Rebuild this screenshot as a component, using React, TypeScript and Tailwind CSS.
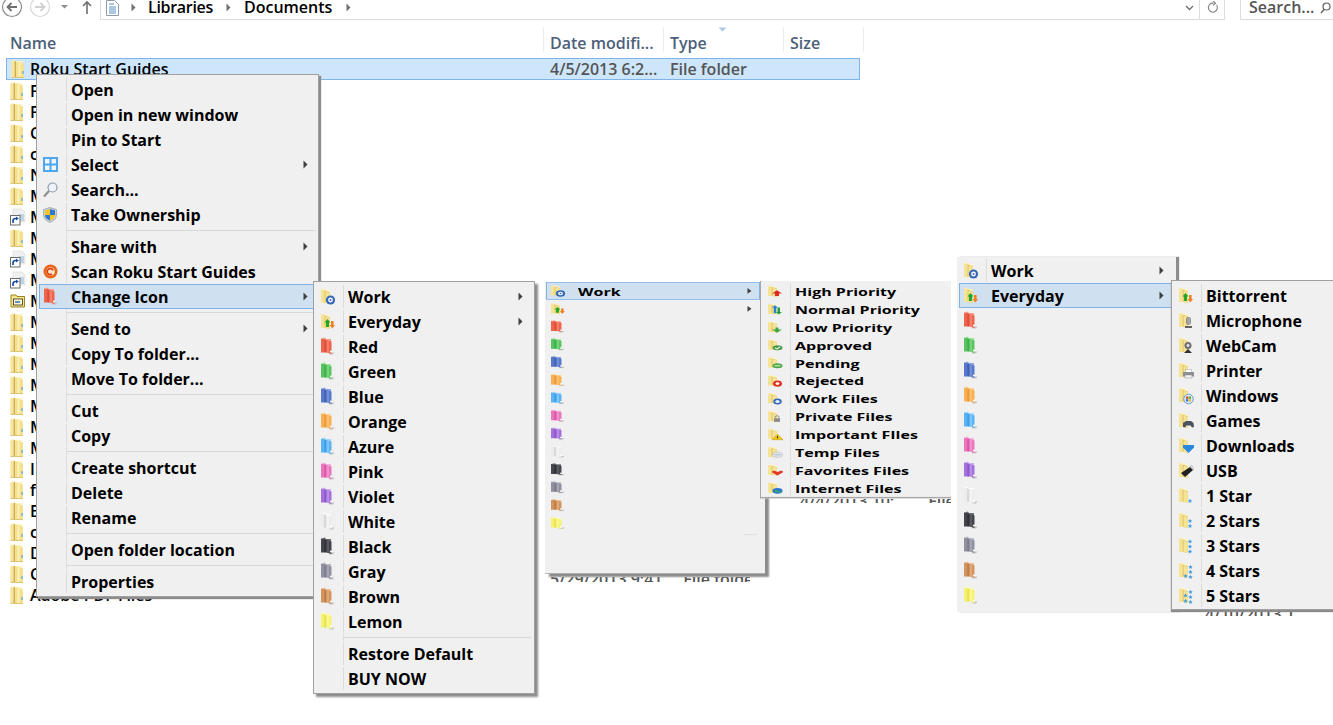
import React from "react";

type Pal = [string, string, string];
const PAL: Record<string, Pal> = {
  yellow: ["#f6e496", "#dcbc5c", "#fdf3c0"],
  red: ["#f0644c", "#c43c2c", "#f89c88"],
  green: ["#58c460", "#2c9a38", "#98e294"],
  blue: ["#5878cc", "#2f4c9c", "#8ca4e4"],
  orange: ["#f8b050", "#dc8828", "#fcd090"],
  azure: ["#58b4f4", "#2c88d8", "#a4d8fa"],
  pink: ["#ec74bc", "#c03c94", "#f6b0dc"],
  violet: ["#a470dc", "#7840b8", "#ccaaee"],
  white: ["#ececec", "#c4c4c4", "#fafafa"],
  black: ["#44444c", "#1c1c20", "#6c6c74"],
  gray: ["#9090a0", "#686878", "#b8b8c4"],
  brown: ["#d49460", "#a86834", "#ecbc94"],
  lemon: ["#f6f270", "#dcd438", "#fcfab4"],
};

function Star({ x, y }: { x: number; y: number }) {
  return (
    <polygon
      transform={`translate(${x} ${y}) scale(0.55)`}
      points="0,-4 1.2,-1.2 4,-1 1.8,0.8 2.6,3.6 0,2 -2.6,3.6 -1.8,0.8 -4,-1 -1.2,-1.2"
      fill="#3c9ce0"
    />
  );
}

function Badge({ b }: { b?: string }) {
  switch (b) {
    case "gear":
      return (
        <g>
          <circle cx="10.5" cy="12" r="4.6" fill="#3468b8" />
          <circle cx="10.5" cy="12" r="2.4" fill="#fff" />
          <circle cx="10.5" cy="12" r="1" fill="#3468b8" />
        </g>
      );
    case "torrent":
      return (
        <g>
          <path d="M7.5 6l3 3.5H9V14H6V9.5H4.5z" fill="#20a828" />
          <path d="M11 8h2.6v4H15l-2.7 3.5L9.6 12H11z" fill="#f08020" />
        </g>
      );
    case "high":
      return <path d="M10 7l5 4.5h-3V15H8v-3.500H5z" fill="#e02c20" />;
    case "normal":
      return (
        <g>
          <path d="M8 3l3 3.5H9.2V14H6.8V6.5H5z" fill="#2480d8" />
          <path d="M10.500 6h2.500v6.500H15L11.800 16 8.800 12.500h1.700z" fill="#20a040" />
        </g>
      );
    case "low":
      return <path d="M8.500 9h3v3H15l-5 4.500L5 12h3.500z" fill="#40a840" />;
    case "approved":
      return (
        <g>
          <ellipse cx="10.5" cy="12.5" rx="5" ry="3.5" fill="#4a9c48" />
          <path d="M8 12.500l2 1.600 3-3" stroke="#fff" strokeWidth="1.2" fill="none" />
        </g>
      );
    case "pending":
      return (
        <g>
          <ellipse cx="10.5" cy="12.5" rx="5" ry="3.5" fill="#48a848" />
          <rect x="7.5" y="11.5" width="6" height="2" fill="#b4e8a8" />
        </g>
      );
    case "rejected":
      return (
        <g>
          <circle cx="10.5" cy="12.5" r="4.5" fill="#e03020" />
          <circle cx="10.5" cy="12.5" r="2" fill="#fff" />
        </g>
      );
    case "workfile":
      return (
        <g>
          <circle cx="10.5" cy="12.5" r="4.2" fill="#2f68c0" />
          <circle cx="10.5" cy="12.5" r="2.2" fill="#e8f0ff" />
        </g>
      );
    case "private":
      return (
        <g>
          <rect x="7" y="11" width="6" height="5" fill="#8c8c8c" />
          <path d="M8 11V9.500a2 2 0 014 0V11" stroke="#808080" fill="none" />
        </g>
      );
    case "important":
      return (
        <g>
          <path d="M10.500 8L16 16H5z" fill="#f0c810" stroke="#b08810" strokeWidth="0.5" />
          <rect x="10" y="11" width="1" height="3" fill="#222" />
        </g>
      );
    case "temp":
      return (
        <g>
          <ellipse cx="10.5" cy="12" rx="5" ry="3.6" fill="#e4e8ec" stroke="#a8b0b8" strokeWidth="0.6" />
          <path d="M7 12h7" stroke="#9cb4cc" />
        </g>
      );
    case "favorites":
      return <path d="M10.500 16L5 11.500Q5 9 7.500 9.500L10.500 11 13.500 9.500Q16 9 16 11.500z" fill="#e03828" />;
    case "internet":
      return (
        <g>
          <ellipse cx="10.5" cy="12.5" rx="5" ry="4" fill="#2878d0" />
          <path d="M7.500 11.500h3v3h-2zM11.500 13h2.500l-1 2h-1.500z" fill="#40b048" />
        </g>
      );
    case "mic":
      return (
        <g>
          <rect x="8" y="5" width="5" height="8" rx="2.4" fill="#8c8c8c" />
          <path d="M7 14h7v2H7z" fill="#606060" />
          <path d="M10 6v6M11.500 6v6" stroke="#d8d8d8" strokeWidth="0.5" />
        </g>
      );
    case "webcam":
      return (
        <g>
          <circle cx="10" cy="8.5" r="3.5" fill="#707070" />
          <circle cx="10" cy="8.5" r="1.4" fill="#e8e8e8" />
          <path d="M6 16l4-4 4 4z" fill="#303030" />
        </g>
      );
    case "printer":
      return (
        <g>
          <rect x="7.5" y="7.5" width="6" height="3" fill="#fff" stroke="#909090" strokeWidth="0.4" />
          <rect x="5" y="10" width="11" height="4.5" fill="#8c9096" />
          <rect x="7" y="13" width="7" height="3" fill="#f0f0f0" stroke="#808080" strokeWidth="0.4" />
        </g>
      );
    case "windows":
      return (
        <g>
          <circle cx="10.5" cy="12" r="4.8" fill="#dce8f8" stroke="#5888c8" strokeWidth="0.8" />
          <rect x="8" y="9.5" width="2.3" height="2.3" fill="#e04828" />
          <rect x="10.7" y="9.5" width="2.3" height="2.3" fill="#50b030" />
          <rect x="8" y="12.2" width="2.3" height="2.3" fill="#2878d8" />
          <rect x="10.7" y="12.2" width="2.3" height="2.3" fill="#f0c020" />
        </g>
      );
    case "games":
      return <path d="M5 11l3-2h5l2.500 2 .5 4-2 .5-1.500-2h-4l-1.500 2-2-.5z" fill="#4c5460" />;
    case "downloads":
      return <path d="M5 8h11v2.500l-5.500 5.500L5 10.500z" fill="#2888e0" />;
    case "usb":
      return (
        <g>
          <path d="M3 11l9-6 3 3-8 7z" fill="#202020" />
          <path d="M12 4.500l2-1 2.500 2.500-1 2z" fill="#e0e0e0" stroke="#666" strokeWidth="0.3" />
        </g>
      );
    case "s1":
      return <Star x={12} y={14} />;
    case "s2":
      return (
        <g>
          <Star x={12} y={9} />
          <Star x={12} y={14} />
        </g>
      );
    case "s3":
      return (
        <g>
          <Star x={12} y={4.5} />
          <Star x={12} y={9.5} />
          <Star x={12} y={14.5} />
        </g>
      );
    case "s4":
      return (
        <g>
          <Star x={12.5} y={5} />
          <Star x={12.5} y={10} />
          <Star x={12.5} y={15} />
          <Star x={7.5} y={14} />
        </g>
      );
    case "s5":
      return (
        <g>
          <Star x={12.5} y={5} />
          <Star x={12.5} y={10} />
          <Star x={12.5} y={15} />
          <Star x={7.5} y={14} />
          <Star x={7.5} y={8.5} />
        </g>
      );
    default:
      return null;
  }
}

function Folder({ c = "yellow", b }: { c?: string; b?: string }) {
  const [base, dark, light] = PAL[c];
  if (!b)
    return (
      <svg width="16" height="18" viewBox="0 0 16 18" className="-mt-[2px] shrink-0">
        <path d="M10 15.500h4.500l-1.500 2H9z" fill="#c4c4c4" />
        <path d="M1 1.500L5 0.500 6 2h5v13H1z" fill={light} />
        <path d="M1 2H4.500V15.500H1z" fill={base} />
        <path d="M4.500 2.500L11.500 4.500V17L4.500 15z" fill={base} />
        <path d="M4.500 2.500V15.500l1 .3V3z" fill={dark} />
        <path d="M8 4v12" stroke={light} strokeWidth="1.5" opacity="0.7" />
        <circle cx="11" cy="14.5" r="1.1" fill="#fff" />
      </svg>
    );
  return (
    <svg width="16" height="18" viewBox="0 0 16 18" className="shrink-0">
      <path d="M1 1.500L4.500 0.500 5.500 2H9.500v12.500H1z" fill={light} />
      <path d="M1 1.500H4.500V15H1z" fill={base} />
      <path d="M4.500 2.500L9.800 4.500V16L4.500 14.500z" fill={dark} />
      <path d="M5.500 3.500L9.800 5V16L5.500 15z" fill={base} />
      <Badge b={b} />
    </svg>
  );
}

function ListFolder({ kind }: { kind: string }) {
  if (kind === "net")
    return (
      <svg width="16" height="18" viewBox="0 0 16 18" className="shrink-0">
        <path d="M1 3h5l1 1.500h7.500V15H1z" fill="#f6e48c" stroke="#9c8420" />
        <rect x="3.5" y="7" width="9" height="6" fill="#fff7c8" stroke="#303030" strokeWidth="0.8" />
        <path d="M5 10h5" stroke="#2060c0" strokeWidth="1.4" />
      </svg>
    );
  if (kind === "short")
    return (
      <svg width="16" height="18" viewBox="0 0 16 18" className="shrink-0">
        <path d="M3 1h9l3 3v10H3z" fill="#eef0f2" stroke="#dcd8c8" strokeWidth="0.6" />
        <rect x="9" y="6" width="5" height="7" fill="#c0d4e8" />
        <rect x="0.5" y="7.5" width="9.5" height="9.5" fill="#fff" stroke="#6c6c6c" />
        <path d="M3 15v-2q0-2.500 2.500-2.500H7" stroke="#1850a8" strokeWidth="1.7" fill="none" />
        <path d="M6 8.500l2.800 2-2.800 2z" fill="#1850a8" />
      </svg>
    );
  return (
    <svg width="14" height="20" viewBox="0 0 14 20" className="shrink-0">
      <path d="M0.500 2L4 1l1 1h7v16H0.500z" fill="#fdf2bc" />
      <path d="M0.500 2.500H4V18.500H0.500z" fill="#f6e49c" />
      <path d="M4.500 2.500L13 4.500V19.500L4.500 18z" fill="#f4e08e" />
      <path d="M4.300 2v16.500" stroke="#c8a850" strokeWidth="1.2" />
      <path d="M8.500 4v14" stroke="#fbf0b8" strokeWidth="2" />
      <path d="M0.500 18.500H12.500" stroke="#dcc476" />
      <rect x="11.5" y="12" width="1.2" height="3" fill="#58a8e8" />
    </svg>
  );
}

type Item = {
  label?: string;
  icon?: React.ReactNode;
  arrow?: boolean;
  active?: boolean;
  sep?: boolean;
  plainSep?: boolean;
  noGutter?: boolean;
};

function Arrow() {
  return (
    <svg width="5" height="9" viewBox="0 0 5 9" className="shrink-0">
      <path d="M0.500 0.500L4.500 4.500 0.500 8.500z" fill="#404040" />
    </svg>
  );
}

function Row({ it }: { it: Item }) {
  if (it.sep)
    return (
      <div className="flex h-[7px] items-center">
        <div className={`h-full w-[28px] shrink-0 border-r ${it.noGutter ? "border-transparent" : "border-[#dcdcdc]"}`} />
        <div className={`h-px flex-1 ${it.plainSep ? "ml-[170px] mr-[3px] bg-[#d8d8d8]" : "bg-[#d8d8d8]"}`} />
      </div>
    );
  return (
    <div
      className={`flex h-[25px] items-center border ${
        it.active ? "border-[#7eb3e8] bg-[#cfe0f1]" : "border-transparent"
      }`}
    >
      <div
        className={`flex h-full w-[27px] shrink-0 items-center border-r pl-[3px] ${
          it.noGutter ? "border-transparent" : "border-[#dcdcdc]"
        }`}
      >
        {it.icon}
      </div>
      <span className="ml-[4px] flex-1 truncate">{it.label}</span>
      {it.arrow && <Arrow />}
      {it.arrow && <span className="w-[7px]" />}
    </div>
  );
}

function MenuItems({ items }: { items: Item[] }) {
  return (
    <>
      {items.map((it, i) => (
        <Row key={i} it={it} />
      ))}
    </>
  );
}

const s = (): Item => ({ sep: true });

const colors: [string, string][] = [
  ["Red", "red"],
  ["Green", "green"],
  ["Blue", "blue"],
  ["Orange", "orange"],
  ["Azure", "azure"],
  ["Pink", "pink"],
  ["Violet", "violet"],
  ["White", "white"],
  ["Black", "black"],
  ["Gray", "gray"],
  ["Brown", "brown"],
  ["Lemon", "lemon"],
];

const menu1: Item[] = [
  { label: "Open" },
  { label: "Open in new window" },
  { label: "Pin to Start" },
  {
    label: "Select",
    arrow: true,
    icon: (
      <svg width="15" height="15" viewBox="0 0 15 15">
        <rect width="15" height="15" fill="#4ca6f0" />
        <rect x="2" y="2" width="4.5" height="4.5" fill="#f0f6fc" />
        <rect x="8.5" y="2" width="4.5" height="4.5" fill="#f0f6fc" />
        <rect x="2" y="8.5" width="4.5" height="4.5" fill="#f0f6fc" />
        <rect x="8.5" y="8.5" width="4.5" height="4.5" fill="#f0f6fc" />
      </svg>
    ),
  },
  {
    label: "Search...",
    icon: (
      <svg width="15" height="16" viewBox="0 0 15 16">
        <circle cx="9.5" cy="5.5" r="4.5" fill="#eef4fa" stroke="#8c9cac" strokeWidth="1.2" />
        <path d="M6 9L1 14.500" stroke="#8c8c8c" strokeWidth="2" />
      </svg>
    ),
  },
  {
    label: "Take Ownership",
    icon: (
      <svg width="14" height="16" viewBox="0 0 14 16">
        <path d="M7 0.500L13.500 2.500V8Q13.500 13 7 15.500 0.500 13 0.500 8V2.500z" fill="#c8ccd4" stroke="#8894a4" strokeWidth="0.6" />
        <path d="M7 2L12 3.500V8H7z" fill="#2f78d0" />
        <path d="M7 8H2V3.500L7 2z" fill="#f4c820" />
        <path d="M7 8h5q0 3.500-5 5.500z" fill="#f4c820" />
        <path d="M7 8H2q0 3.500 5 5.500z" fill="#2f78d0" />
      </svg>
    ),
  },
  s(),
  { label: "Share with", arrow: true },
  {
    label: "Scan Roku Start Guides",
    icon: (
      <svg width="15" height="15" viewBox="0 0 15 15">
        <circle cx="7.5" cy="7.5" r="7" fill="#e8661c" />
        <circle cx="7.5" cy="7.5" r="4.3" fill="#fbe6c8" />
        <path d="M10 6.500a3 3 0 10-1 3.500" stroke="#d83c10" strokeWidth="1.7" fill="none" />
      </svg>
    ),
  },
  {
    label: "Change Icon",
    arrow: true,
    active: true,
    icon: <Folder c="red" />,
  },
  s(),
  { label: "Send to", arrow: true },
  { label: "Copy To folder..." },
  { label: "Move To folder..." },
  s(),
  { label: "Cut" },
  { label: "Copy" },
  s(),
  { label: "Create shortcut" },
  { label: "Delete" },
  { label: "Rename" },
  s(),
  { label: "Open folder location" },
  s(),
  { label: "Properties" },
];

const menu2: Item[] = [
  { label: "Work", arrow: true, icon: <Folder b="gear" /> },
  { label: "Everyday", arrow: true, icon: <Folder b="torrent" /> },
  ...colors.map(([label, c]) => ({ label, icon: <Folder c={c} /> })),
  s(),
  { label: "Restore Default" },
  { label: "BUY NOW" },
];

const colorBlanks: Item[] = colors.map(([, c]) => ({ icon: <Folder c={c} />, noGutter: true }));

const menu3: Item[] = [
  { label: "Work", arrow: true, active: true, icon: <Folder b="gear" /> },
  { arrow: true, icon: <Folder b="torrent" />, noGutter: true },
  ...colorBlanks,
  { sep: true, plainSep: true, noGutter: true },
];

const menu5: Item[] = [
  { label: "Work", arrow: true, icon: <Folder b="gear" /> },
  { label: "Everyday", arrow: true, active: true, icon: <Folder b="torrent" /> },
  ...colorBlanks,
];

const menu4: Item[] = (
  [
    ["High Priority", "high"],
    ["Normal Priority", "normal"],
    ["Low Priority", "low"],
    ["Approved", "approved"],
    ["Pending", "pending"],
    ["Rejected", "rejected"],
    ["Work Files", "workfile"],
    ["Private Files", "private"],
    ["Important FIles", "important"],
    ["Temp Files", "temp"],
    ["Favorites Files", "favorites"],
    ["Internet Files", "internet"],
  ] as [string, string][]
).map(([label, b]) => ({ label, icon: <Folder b={b} /> }));

const menu6: Item[] = (
  [
    ["Bittorrent", "torrent"],
    ["Microphone", "mic"],
    ["WebCam", "webcam"],
    ["Printer", "printer"],
    ["Windows", "windows"],
    ["Games", "games"],
    ["Downloads", "downloads"],
    ["USB", "usb"],
    ["1 Star", "s1"],
    ["2 Stars", "s2"],
    ["3 Stars", "s3"],
    ["4 Stars", "s4"],
    ["5 Stars", "s5"],
  ] as [string, string][]
).map(([label, b]) => ({ label, icon: <Folder b={b} /> }));

const rows: [string, string][] = [
  ["Files", "f"], ["Finance", "f"], ["Customers", "f"], ["camera", "f"], ["Notes", "f"], ["Manuals", "f"],
  ["My Shapes", "short"], ["My Data", "f"], ["My Music", "short"], ["My Videos", "short"], ["My Shared", "net"],
  ["Maps", "f"], ["Media", "f"], ["Misc", "f"], ["Movies", "f"], ["Music", "f"], ["Mail", "f"], ["Models", "f"],
  ["Images", "f"], ["fonts", "f"], ["Ebooks", "f"], ["code", "f"], ["Data", "f"], ["Clients", "f"],
  ["Adobe PDF Files", "f"],
];

function Chevron() {
  return (
    <svg width="5" height="9" viewBox="0 0 5 9" className="shrink-0">
      <path d="M0.500 0.500L4.500 4.500 0.500 8.500z" fill="#707070" />
    </svg>
  );
}

function Peek({ className, text }: { className: string; text: string }) {
  return (
    <div className={`absolute overflow-hidden whitespace-pre text-[#555] ${className}`}>
      <div className="-mt-[9px] leading-[22px]">{text}</div>
    </div>
  );
}

export default function App() {
  return (
    <div
      className="relative h-[725px] w-[1333px] overflow-hidden bg-white text-[16px] font-semibold text-black"
      style={{ fontFamily: '"Open Sans", "Noto Sans", sans-serif' }}
    >
      {/* nav bar */}
      <div className="flex h-[21px] items-start">
        <div className="flex w-[100px] shrink-0 items-center">
          <svg width="100" height="20" viewBox="0 0 100 20">
            <circle cx="12" cy="7" r="9.5" fill="#fff" stroke="#8c8c8c" strokeWidth="1.2" />
            <path d="M17 7H8M11.500 3L7.500 7l4 4" stroke="#707070" strokeWidth="1.8" fill="none" />
            <circle cx="40" cy="7" r="9.5" fill="#fff" stroke="#d8d8d8" strokeWidth="1.2" />
            <path d="M35 7h9M40.500 3l4 4-4 4" stroke="#d0d0d0" strokeWidth="1.8" fill="none" />
            <path d="M61 5h7l-3.500 3.500z" fill="#8c8c8c" />
            <path d="M87 14V2M83 6l4-4 4 4" stroke="#707070" strokeWidth="1.6" fill="none" />
          </svg>
        </div>
        <div className="-mt-px flex h-[21px] w-[1125px] items-center border-b border-l border-r border-[#dcdcdc]">
          <svg width="13" height="16" viewBox="0 0 13 16" className="-mt-[3px] ml-[5px] shrink-0">
            <path d="M0.500 0.500h8l4 4v11H0.500z" fill="#fff" stroke="#8c9cac" />
            <path d="M3 4h5M3 7h7M3 9h7M3 11h7M3 13h7" stroke="#5890c8" />
          </svg>
          <span className="-mt-[3px] ml-[12px]"><Chevron /></span>
          <span className="-mt-[5px] ml-[12px] tracking-[-0.3px]">Libraries</span>
          <span className="-mt-[3px] ml-[13px]"><Chevron /></span>
          <span className="-mt-[5px] ml-[13px]">Documents</span>
          <span className="-mt-[3px] ml-[14px]"><Chevron /></span>
          <div className="flex-1" />
          <svg width="9" height="6" viewBox="0 0 9 6" className="-mt-[3px] mr-[5px]">
            <path d="M1 1l3.500 3.500L8 1" stroke="#707070" strokeWidth="1.3" fill="none" />
          </svg>
          <div className="h-full w-px bg-[#dcdcdc]" />
          <svg width="12" height="13" viewBox="0 0 12 13" className="-mt-[3px] ml-[7px] mr-[3px]">
            <path d="M9.500 4a4.500 4.500 0 11-3-1.800M6 0l2.500 2.200L6 4.200" stroke="#808080" strokeWidth="1.1" fill="none" />
          </svg>
          <div className="w-[2px]" />
        </div>
        <div className="-mt-px ml-[15px] flex h-[21px] flex-1 items-center border-b border-l border-[#dcdcdc] pl-[8px] text-[#555]">
          <span className="-mt-[5px]">Search...</span>
          <svg width="11" height="12" viewBox="0 0 11 12" className="-mt-[3px] ml-[6px]">
            <circle cx="6.5" cy="4.5" r="3.5" fill="none" stroke="#606060" strokeWidth="1.2" />
            <path d="M4 7.500L1 11" stroke="#606060" strokeWidth="1.4" />
          </svg>
        </div>
      </div>

      {/* column headers */}
      <div className="mt-[6px] flex h-[25px] w-[864px] items-center text-[#4c607a]">
        <div className="h-full w-[543px] pl-[10px] pt-[4px]">Name</div>
        <div className="h-full w-[120px] border-l border-[#e8eef4] pl-[6px] pt-[4px]">Date modifi...</div>
        <div className="relative h-full w-[120px] border-l border-[#e8eef4] pl-[6px] pt-[4px]">
          Type
          <svg width="9" height="5" viewBox="0 0 9 5" className="absolute left-[54px] top-0">
            <path d="M0.500 0.500h8L4.500 4.500z" fill="#a8c8e0" />
          </svg>
        </div>
        <div className="h-full w-[81px] border-l border-r border-[#e8eef4] pl-[6px] pt-[4px]">Size</div>
      </div>

      {/* file list */}
      <div className="mt-[6px]">
        <div className="ml-[6px] flex h-[22px] w-[854px] items-center border border-[#7eb4ea] bg-[#cde6fb]">
          <div className="ml-[4px] w-[19px]">
            <ListFolder kind="f" />
          </div>
          <span className="w-[520px]">Roku Start Guides</span>
          <span className="w-[120px] text-[#555]">4/5/2013 6:2...</span>
          <span className="text-[#555]">File folder</span>
        </div>
        {rows.map(([name, kind], i) => (
          <div key={i} className="flex h-[21px] items-center pl-[10px]">
            <div className="w-[20px]">
              <ListFolder kind={kind} />
            </div>
            <span>{name}</span>
          </div>
        ))}
      </div>

      <Peek className="left-[800px] top-[499px] h-[4px] w-[151px]" text={"4/4/2013 10:...     File"} />
      <Peek className="left-[550px] top-[577px] h-[5px] w-[200px]" text={"5/29/2013 9:41     File folder"} />
      <Peek className="left-[1205px] top-[612px] h-[4px] w-[90px]" text={"4/10/2013 1:"} />

      {/* main context menu */}
      <div className="absolute left-[36px] top-[74px] z-10 w-[283px] border border-[#a0a0a0] bg-[#f0f0f0] pb-[2px] pl-[2px] pr-[2px] pt-[2px] font-bold shadow-[2px_2px_1px_#8c8c8c]">
        <MenuItems items={menu1} />
      </div>

      {/* submenu */}
      <div className="absolute left-[313px] top-[281px] z-20 w-[222px] border border-[#a0a0a0] bg-[#f0f0f0] pb-[2px] pl-[2px] pr-[3px] pt-[2px] font-bold shadow-[3px_3px_2px_#8c8c8c]">
        <MenuItems items={menu2} />
      </div>

      {/* squashed copy */}
      <div className="absolute left-[545px] top-[282px] z-20 h-[408px] w-[220px] origin-top scale-y-[0.715] border-b border-[#a0a0a0] bg-[#f0f0f0] pl-[1px] pr-[5px] font-bold shadow-[4px_4px_2px_#8c8c8c]">
        <MenuItems items={menu3} />
      </div>

      <div className="absolute left-[760px] top-[281px] z-30 h-[304px] w-[191px] origin-top scale-y-[0.715] overflow-hidden border-b-2 border-l border-[#a8a8a8] bg-[#f0f0f0] pl-[2px] pt-[2.2px] font-bold">
        <MenuItems items={menu4} />
      </div>

      {/* everyday copy */}
      <div className="absolute left-[957px] top-[257px] z-20 h-[355px] w-[219px] bg-[#f0f0f0] pl-[2px] pr-[4px] pt-[1px] font-bold shadow-[3px_0_1px_#8c8c8c]">
        <MenuItems items={menu5} />
      </div>

      <div className="absolute left-[1171px] top-[280px] z-30 h-[330px] w-[170px] border border-[#a0a0a0] bg-[#f0f0f0] pl-[2px] pt-[2px] font-bold shadow-[0_2px_1px_#8c8c8c]">
        <MenuItems items={menu6} />
      </div>
    </div>
  );
}
